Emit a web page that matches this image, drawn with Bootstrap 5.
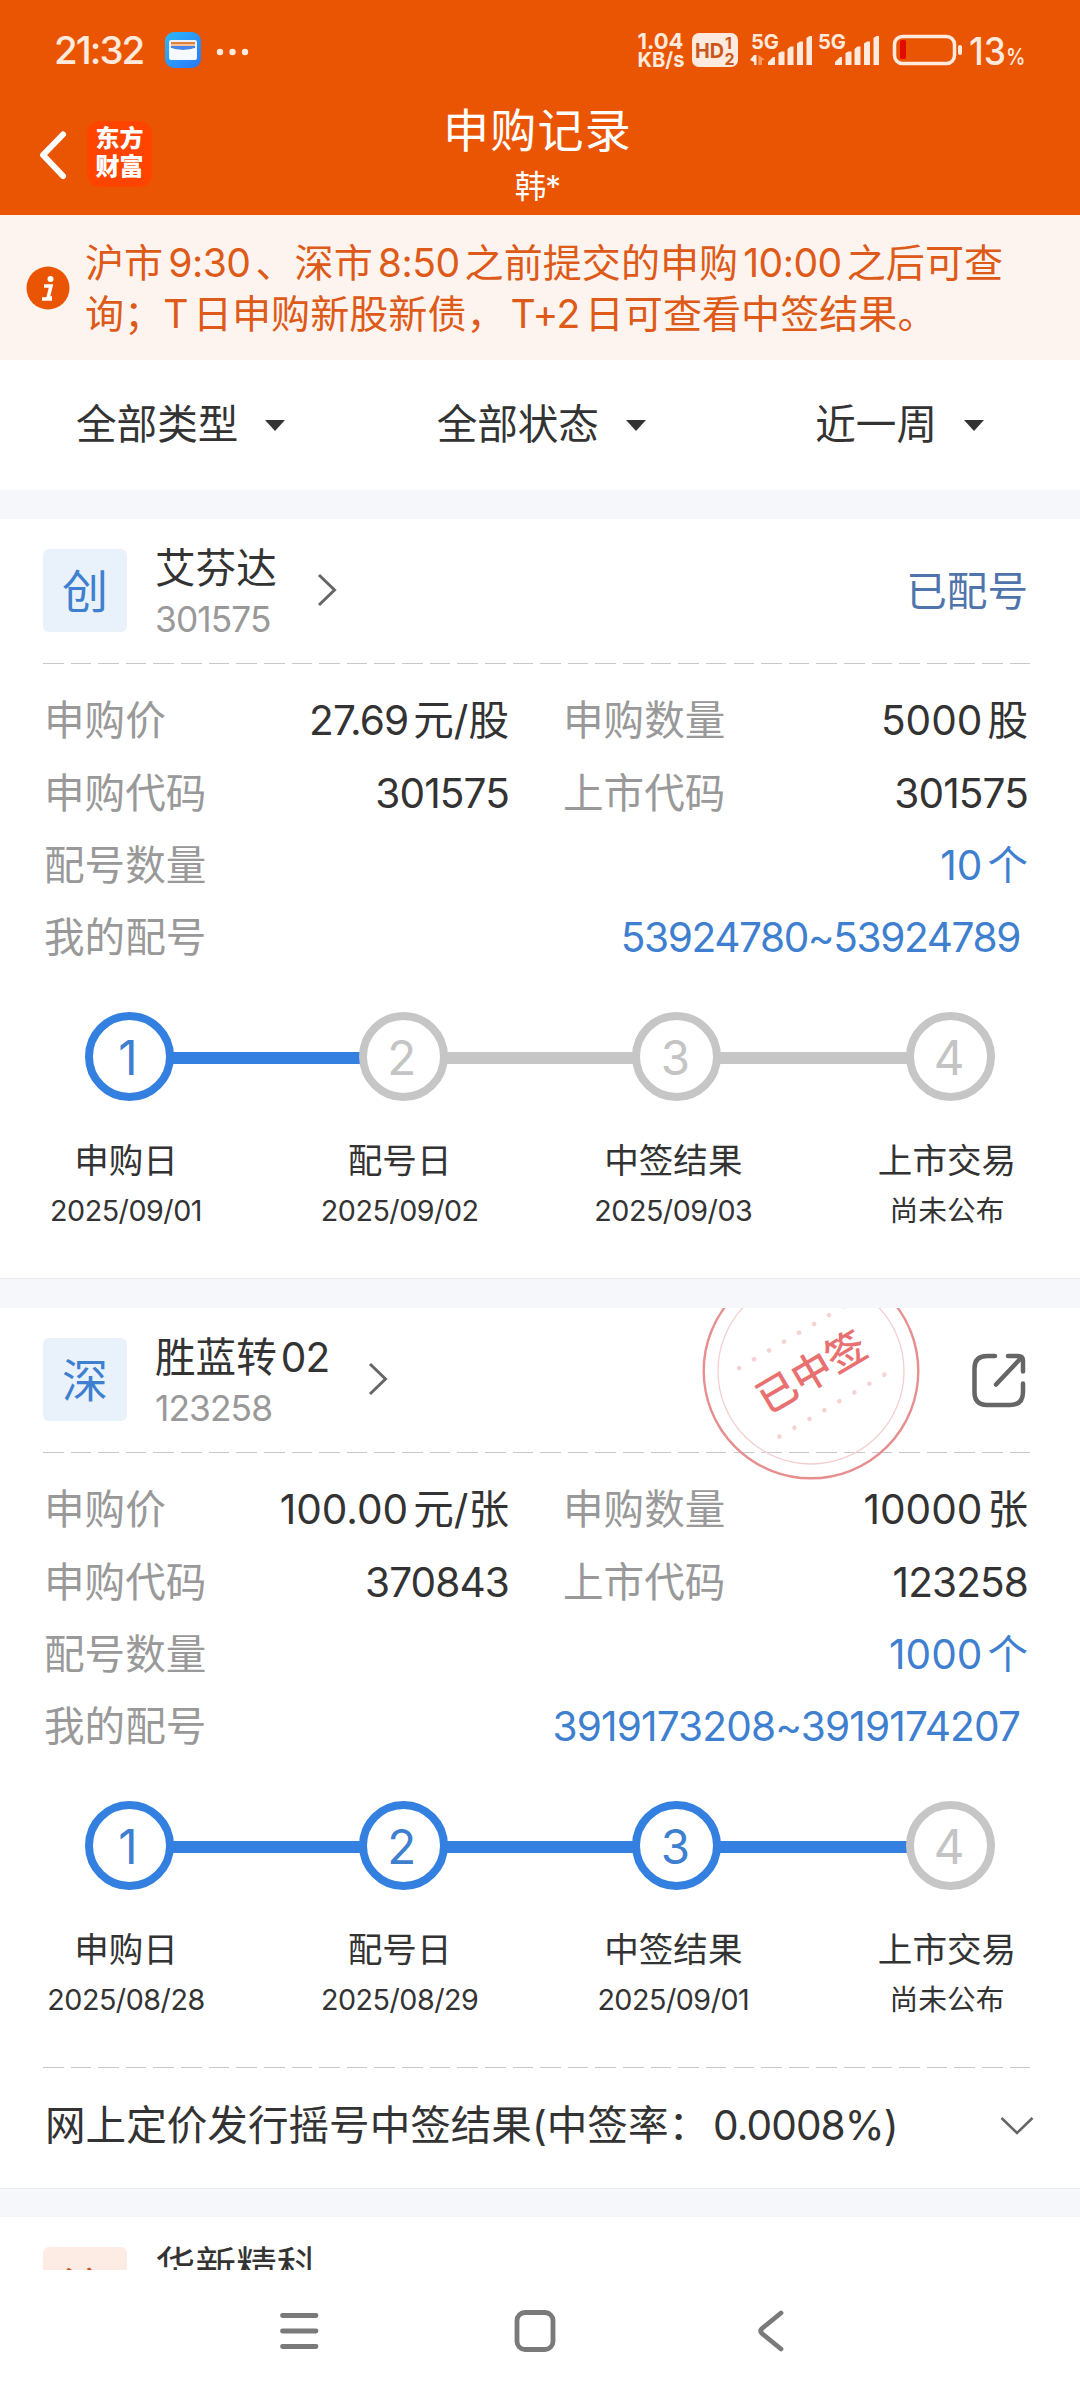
<!DOCTYPE html>
<html lang="zh-CN">
<head>
<meta charset="utf-8">
<meta name="viewport" content="width=device-width, initial-scale=1">
<title>申购记录</title>
<link href="https://cdn.jsdelivr.net/npm/bootstrap@5.3.0/dist/css/bootstrap.min.css" rel="stylesheet">
<style>
  :root { --brand:#ea5504; --blue:#3380e0; --blue-text:#3f7fcf; --ink:#333; --muted:#999; --off:#c6c6c6; }
  body { width:1080px; height:2400px; overflow:hidden; background:#fff; color:var(--ink);
    font-family:Inter,"Noto Sans CJK SC",sans-serif; font-size:40.6px; line-height:1; }
  .screen { height:2400px; }
  svg { display:block; flex:none; overflow:visible; }
  .status-bar { height:100px; padding:0 45px 0 54px; color:#ffeadd; }
  .clock { font-size:38.5px; font-weight:500; width:111px; letter-spacing:-2px; line-height:48px; }
  .app-header { height:215px; background:var(--brand); color:#fff; }
  .title-bar { height:115px; padding:0 45px 0 40px; }
  .title-side { width:200px; padding-top:21px; }
  .logo-tile { width:65px; height:66px; border-radius:13px; background:#ff4400; margin-left:21px;
    font-size:24px; line-height:27.5px; font-weight:900; }
  .page-title { font-size:46px; line-height:60px; letter-spacing:1.2px; }
  .user-name { font-size:31.5px; line-height:46px; letter-spacing:-1px; }
  .notice { height:145px; background:#fef4ef; color:#dd5a18; padding-left:26px; }
  .notice-text { font-size:39.1px; line-height:51px; margin-left:15px; }
  .notice-text span { margin:0 5px; letter-spacing:-.5px; }
  .filters { height:130px; padding:0 96px 0 76px; }
  .filters .mid { margin-right:18px; }
  .filters .caret { width:0; height:0; border:10px solid transparent; border-top:11px solid var(--ink); border-bottom:0; margin-left:27px; }
  .gap-bar { height:30px; background:#f6f7fa; border-top:1px solid #e9ecec; }
  .gap-bar.first { height:29px; border-top-color:#f6f7fa; }
  .record { position:relative; padding:0 52px 0 43px; overflow:hidden; }
  .record-head { height:144px; padding-top:24px; }
  .tile { width:84px; height:83px; margin-top:6px; border-radius:6px; background:#e9f2fb; color:var(--blue-text); font-size:46px; }
  .names { margin-left:28px; line-height:51px; white-space:nowrap; }
  .names small { display:block; font-size:35.3px; color:var(--muted); letter-spacing:-.9px; }
  .tile-warm { background:#fcece4; color:#d0561f; }
  .state { color:#4f74ab; margin-top:28px; line-height:41px; height:41px; }
  .dashes { width:988px; height:1px; background:repeating-linear-gradient(90deg,#c8c8c8 0 20.6px,transparent 20.6px 27.62px); }
  .fields { margin-top:21.5px; }
  .field-row { height:72.3px; }
  .field-row > .half-a { width:466px; margin-right:53px; }
  .key { color:var(--muted); margin-left:1px; }
  .num { letter-spacing:-.9px; }
  .cnt { margin-right:5px; }
  .go { color:var(--blue-text); }
  .range { padding-right:8px; letter-spacing:-1.4px; }
  .range.long { letter-spacing:-.85px; }
  .steps { margin-top:37.500px; padding:0 33px 0 42px; }
  .dot { width:89px; height:89px; flex:none; border:8.5px solid var(--off); border-radius:50%; color:#c4c4c4; font-size:47.5px; padding:2px 3px 0 0; }
  .dot.on { border-color:var(--blue); color:var(--blue-text); }
  .bar { height:12px; background:var(--off); margin:2px -2px 0; }
  .bar.on { background:var(--blue); }
  .step-names { margin:34px -1px 0 1px; }
  .step-names > div { width:164px; text-align:center; white-space:nowrap; font-size:34.6px; line-height:50px; }
  .step-names small { display:block; font-size:28.7px; letter-spacing:-.5px; margin-top:1px; }
  .step-names small.cn { letter-spacing:0; }
  .stamp { position:absolute; left:702px; top:0; }
  .result { height:120px; padding:37px 0 0 2px; line-height:41px; white-space:nowrap; }
  .peek { height:53px; }
  .nav-keys { height:130px; background:#fff; }
</style>
</head>
<body>
<div class="screen d-flex flex-column">
  <header class="app-header">
    <div class="status-bar d-flex align-items-center">
      <span class="clock">21:32</span>
      <svg width="36" height="36" viewBox="0 0 36 36">
        <defs><linearGradient id="mailbg" x1="0" y1="0" x2="1" y2="1"><stop offset="0" stop-color="#2bb8fa"/><stop offset="1" stop-color="#2b77f8"/></linearGradient></defs>
        <rect width="36" height="36" rx="9" fill="url(#mailbg)"/>
        <rect x="4" y="8" width="28" height="20" rx="2" fill="#e9f3fd"/>
        <rect x="6" y="10" width="24" height="3" fill="#e3803a"/><rect x="6" y="12" width="24" height="2" fill="#f4c39a"/>
        <path d="M6 14h24v2q-12 4-24 0z" fill="#4785e8"/>
        <path d="M5 16q13 4 26 0v10a1.500 1.500 0 0 1-1.500 1.500h-23a1.500 1.500 0 0 1-1.500-1.500z" fill="#f6faff"/>
      </svg>
      <svg width="34" height="8" viewBox="0 0 34 8" style="margin-left:15px;margin-top:3px" fill="#ffeadd"><circle cx="4" cy="4" r="3.200"/><circle cx="16.500" cy="4" r="3.200"/><circle cx="29" cy="4" r="3.200"/></svg>
      <svg class="ms-auto" width="405" height="60" viewBox="630 20 405 60" fill="#ffeadd" font-family="Inter" font-weight="700">
        <text x="637.500" y="49" font-size="22" textLength="46" lengthAdjust="spacingAndGlyphs">1.04</text>
        <text x="637.500" y="67" font-size="20.500" textLength="47" lengthAdjust="spacingAndGlyphs">KB/s</text>
        <rect x="692" y="33" width="46" height="34" rx="7"/>
        <g fill="#c9571c"><text x="695" y="58" font-size="20.500" textLength="29" lengthAdjust="spacingAndGlyphs">HD</text><text x="725" y="49" font-size="16">1</text><text x="724.500" y="64.500" font-size="16">2</text></g>
        <text x="751" y="48.500" font-size="20.500" textLength="28" lengthAdjust="spacingAndGlyphs">5G</text>
        <path d="M754 55h2.500v10h-2.500v-3l-4-2z"/><path d="M758.500 65v-10l6.500 5h-3v5z" fill="#ff9a5c"/>
        <path id="bars" d="M768 65v-3l5-5h2v8zM778.500 65v-12l3-1.500h3v13.500zM787.500 65v-16l3-2.500h3v18.500zM797 65v-21.500l3-2h3v23.500zM806.500 65v-27l3-2h2.500v29z"/>
        <text x="818" y="48.500" font-size="20.500" textLength="28" lengthAdjust="spacingAndGlyphs">5G</text>
        <use href="#bars" x="67"/>
        <rect x="894.500" y="36.500" width="60" height="27" rx="8" fill="none" stroke="#ffeadd" stroke-width="3.500"/>
        <rect x="900" y="40" width="6" height="19" rx="1.500" fill="#e30b00"/>
        <rect x="958" y="45" width="4" height="10" rx="2"/>
        <text x="969" y="64.500" font-size="38.500" font-weight="500" textLength="37" lengthAdjust="spacingAndGlyphs">13</text>
        <text x="1006" y="64.500" font-size="23" font-weight="500" textLength="19.500" lengthAdjust="spacingAndGlyphs">%</text>
      </svg>
    </div>
    <div class="title-bar d-flex justify-content-between">
      <div class="title-side d-flex">
        <svg width="26" height="66" viewBox="0 0 26 66" fill="none" stroke="#fff" stroke-width="6" stroke-linejoin="round" stroke-linecap="round"><path d="M23 13.500L3 34L23 55"/></svg>
        <div class="logo-tile text-center pt-1">东方<br>财富</div>
      </div>
      <div class="text-center">
        <div class="page-title">申购记录</div>
        <div class="user-name mt-1">韩*</div>
      </div>
      <div class="title-side"></div>
    </div>
  </header>

  <div class="notice d-flex align-items-center">
    <svg width="44" height="44" viewBox="0 0 44 44"><circle cx="22" cy="22" r="21.500" fill="#ea5504"/><circle cx="24.500" cy="13" r="3" fill="#fff"/><path d="M18 20h7l-3 12h4M16 33h10" fill="none" stroke="#fff" stroke-width="3.500"/></svg>
    <div class="notice-text text-nowrap">沪市<span>9:30</span>、深市<span>8:50</span>之前提交的申购<span>10:00</span>之后可查<br>询；<span class="ms-0">T</span>日申购新股新债，<span>T+2</span>日可查看中签结果。</div>
  </div>

  <div class="filters d-flex justify-content-between align-items-center">
    <div class="d-flex align-items-center">全部类型<span class="caret"></span></div>
    <div class="mid d-flex align-items-center">全部状态<span class="caret"></span></div>
    <div class="d-flex align-items-center">近一周<span class="caret"></span></div>
  </div>
  <div class="gap-bar first"></div>

  <section class="record" style="height:759px">
    <div class="record-head d-flex">
      <div class="tile d-flex align-items-center justify-content-center">创</div>
      <div class="names">艾芬达<small>301575</small></div>
      <svg width="20" height="34" viewBox="0 0 20 34" style="margin:30px 0 0 40px" fill="none" stroke="#666" stroke-width="3"><path d="M2 2L17.500 17L2 32"/></svg>
      <div class="state ms-auto">已配号</div>
    </div>
    <div class="dashes"></div>
    <div class="fields">
      <div class="field-row d-flex align-items-center"><div class="half-a d-flex justify-content-between"><span class="key">申购价</span><span><span class="num cnt">27.69</span>元/股</span></div><span class="key">申购数量</span><span class="ms-auto"><span class="cnt">5000</span>股</span></div>
      <div class="field-row d-flex align-items-center"><div class="half-a d-flex justify-content-between"><span class="key">申购代码</span><span class="num">301575</span></div><span class="key">上市代码</span><span class="num ms-auto">301575</span></div>
      <div class="field-row d-flex align-items-center justify-content-between"><span class="key">配号数量</span><span class="go"><span class="cnt">10</span>个</span></div>
      <div class="field-row d-flex align-items-center justify-content-between"><span class="key">我的配号</span><span class="go range">53924780~53924789</span></div>
    </div>
    <div class="steps d-flex align-items-center">
      <div class="dot on d-flex align-items-center justify-content-center">1</div><div class="bar on flex-fill"></div>
      <div class="dot d-flex align-items-center justify-content-center">2</div><div class="bar flex-fill"></div>
      <div class="dot d-flex align-items-center justify-content-center">3</div><div class="bar flex-fill"></div>
      <div class="dot d-flex align-items-center justify-content-center">4</div>
    </div>
    <div class="step-names d-flex justify-content-between">
      <div>申购日<small>2025/09/01</small></div><div>配号日<small>2025/09/02</small></div><div>中签结果<small>2025/09/03</small></div><div>上市交易<small class="cn">尚未公布</small></div>
    </div>
  </section>
  <div class="gap-bar"></div>

  <section class="record" style="height:880px">
    <div class="record-head d-flex">
      <div class="tile d-flex align-items-center justify-content-center">深</div>
      <div class="names">胜蓝转<span class="num" style="margin-left:4px">02</span><small>123258</small></div>
      <svg width="20" height="34" viewBox="0 0 20 34" style="margin:30px 0 0 39px" fill="none" stroke="#666" stroke-width="3"><path d="M2 2L17.500 17L2 32"/></svg>
      <svg class="ms-auto" width="54" height="56" viewBox="0 0 54 56" style="margin:20px 2px 0 0" fill="none" stroke="#666" stroke-width="4.500" stroke-linecap="round"><path d="M23 4H15Q2.500 4 2.500 16.500V40Q2.500 53 15 53H38Q51 53 51 40V31.500M36 4H46Q51 4 51 9V19.500M24 32.500L49 6"/></svg>
    </div>
    <div class="dashes"></div>
    <svg class="stamp" width="220" height="174" viewBox="702 1308 220 174">
      <g fill="none"><circle cx="811" cy="1371" r="107.300" stroke="#e78f8f" stroke-width="2.400"/><circle cx="811" cy="1371" r="93" stroke="#f5cfcf" stroke-width="1.300"/></g>
      <g transform="rotate(-30.500 811 1371)">
        <g fill="none" stroke="#f5d3d2" stroke-width="4.600" stroke-linecap="round" stroke-dasharray="0 17.400"><path d="M750.500 1332H873"/><path d="M750.500 1411.500H873"/></g>
        <text x="811" y="1386.500" text-anchor="middle" font-size="40" font-weight="500" fill="#e87070" font-family="Noto Sans CJK SC, sans-serif">已中签</text>
      </g>
    </svg>
    <div class="fields">
      <div class="field-row d-flex align-items-center"><div class="half-a d-flex justify-content-between"><span class="key">申购价</span><span><span class="cnt">100.00</span>元/张</span></div><span class="key">申购数量</span><span class="ms-auto"><span class="cnt">10000</span>张</span></div>
      <div class="field-row d-flex align-items-center"><div class="half-a d-flex justify-content-between"><span class="key">申购代码</span><span class="num">370843</span></div><span class="key">上市代码</span><span class="num ms-auto">123258</span></div>
      <div class="field-row d-flex align-items-center justify-content-between"><span class="key">配号数量</span><span class="go"><span class="cnt">1000</span>个</span></div>
      <div class="field-row d-flex align-items-center justify-content-between"><span class="key">我的配号</span><span class="go range long">3919173208~3919174207</span></div>
    </div>
    <div class="steps d-flex align-items-center">
      <div class="dot on d-flex align-items-center justify-content-center">1</div><div class="bar on flex-fill"></div>
      <div class="dot on d-flex align-items-center justify-content-center">2</div><div class="bar on flex-fill"></div>
      <div class="dot on d-flex align-items-center justify-content-center">3</div><div class="bar on flex-fill"></div>
      <div class="dot d-flex align-items-center justify-content-center">4</div>
    </div>
    <div class="step-names d-flex justify-content-between">
      <div>申购日<small>2025/08/28</small></div><div>配号日<small>2025/08/29</small></div><div>中签结果<small>2025/09/01</small></div><div>上市交易<small class="cn">尚未公布</small></div>
    </div>
    <div class="dashes" style="margin-top:42px"></div>
    <div class="result d-flex">
      <span>网上定价发行摇号中签结果(中签率：<span class="num" style="margin-left:4px">0.0008%)</span></span>
      <svg class="ms-auto" width="34" height="20" viewBox="0 0 34 20" style="margin:11px -6px 0 0" fill="none" stroke="#666" stroke-width="2.500"><path d="M1.500 2L17 17L32.500 2"/></svg>
    </div>
  </section>
  <div class="gap-bar" style="height:29px"></div>

  <section class="record peek">
    <div class="record-head d-flex">
      <div class="tile tile-warm d-flex align-items-center justify-content-center">沪</div>
      <div class="names">华新精科</div>
    </div>
  </section>

  <nav class="nav-keys">
    <svg width="1080" height="130" viewBox="0 2270 1080 130" fill="none" stroke="#7a7a7a" stroke-width="4.800" stroke-linecap="round" stroke-linejoin="round"><path d="M282.500 2315.500H316M282.500 2331H316M282.500 2346.500H316"/><rect x="517" y="2312.500" width="36" height="37" rx="8"/><path d="M781 2313L762 2328.500Q759.500 2331 762 2333.500L781 2349"/></svg>
  </nav>
</div>
<script src="https://cdn.jsdelivr.net/npm/bootstrap@5.3.0/dist/js/bootstrap.bundle.min.js"></script>
</body>
</html>
